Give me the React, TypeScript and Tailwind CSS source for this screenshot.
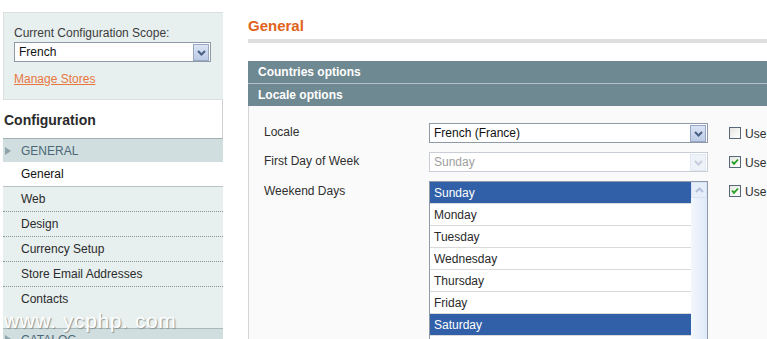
import React from "react";

function Chevron({ up = false, color }: { up?: boolean; color: string }) {
  return (
    <svg width="9" height="6" viewBox="0 0 9 6">
      <path
        d={up ? "M1 5 L4.5 1.5 L8 5" : "M1 1 L4.5 4.5 L8 1"}
        fill="none"
        stroke={color}
        strokeWidth="2"
      />
    </svg>
  );
}

function ArrowBtn({ disabled = false }: { disabled?: boolean }) {
  return (
    <div
      className={
        disabled
          ? "w-[16px] h-[17px] mt-[1px] mr-[1px] border border-[#e2e8f2] bg-[#eef2f9] flex items-center justify-center"
          : "w-[16px] h-[17px] mt-[1px] mr-[1px] border border-[#98a8c4] bg-gradient-to-b from-[#dbe4f4] to-[#bccbe6] flex items-center justify-center"
      }
    >
      <Chevron color={disabled ? "#c4cede" : "#4a5e86"} />
    </div>
  );
}

function Select({
  value,
  width,
  disabled = false,
}: {
  value: string;
  width: string;
  disabled?: boolean;
}) {
  return (
    <div
      className={
        (disabled ? "border-[#c9ced6] text-[#a0a0a0] " : "border-[#8f9aa8] text-[#111] ") +
        "h-[20px] shrink-0 border bg-white flex justify-between items-start " +
        width
      }
    >
      <span className="pl-[4px] leading-[19px]">{value}</span>
      <ArrowBtn disabled={disabled} />
    </div>
  );
}

function Checkbox({ checked }: { checked: boolean }) {
  return (
    <div className="w-[12px] h-[12px] border border-[#56687a] bg-gradient-to-br from-[#e6e6e0] to-white flex items-center justify-center">
      {checked && (
        <svg width="8" height="8" viewBox="0 0 8 8">
          <path d="M1 3.5 L3 5.8 L7 1.5" fill="none" stroke="#20a020" strokeWidth="1.8" />
        </svg>
      )}
    </div>
  );
}

function Tab({ label, first = false }: { label: string; first?: boolean }) {
  return (
    <div
      className={
        (first ? "border-t border-[#b8c4c4] " : "border-t border-dotted border-[#8a9494] ") +
        "h-[25px] bg-[#e7efef] pl-[18px] leading-[25px] text-[#2b2b2b]"
      }
    >
      {label}
    </div>
  );
}

const days = ["Sunday", "Monday", "Tuesday", "Wednesday", "Thursday", "Friday", "Saturday"];
const selected = [0, 6];

export default function App() {
  return (
    <div className="relative w-[767px] h-[339px] overflow-hidden bg-white flex items-start font-['Liberation_Sans',Arial,sans-serif] text-[12px] text-[#2f2f2f]">
      {/* Sidebar */}
      <div className="ml-[3px] w-[220px] shrink-0 pt-[12px]">
        <div className="h-[88px] bg-[#e7efef] border-t border-l border-b border-[#d8e0e0] pl-[10px] pt-[13px]">
          <div className="leading-[15px] text-[#3c3c3c]">Current Configuration Scope:</div>
          <div className="mt-[1px]">
            <Select value="French" width="w-[197px]" />
          </div>
          <div className="mt-[10px] leading-[15px] text-[#e7773d] underline">Manage Stores</div>
        </div>
        <div className="h-[39px] bg-white border-r border-r-[#cfcfcf] border-b border-b-[#9fb0b2] pl-[1px] flex items-center">
          <span className="text-[14px] font-bold text-[#2a2a2a] mt-[2px]">Configuration</span>
        </div>
        <div className="h-[23px] bg-[#d1dedf] flex items-center">
          <svg width="6" height="8" viewBox="0 0 6 8" className="ml-[2px]">
            <path d="M0 0 L6 4 L0 8 Z" fill="#8fa3aa" />
          </svg>
          <span className="ml-[10px] mt-[1px] text-[#4b6878]">GENERAL</span>
        </div>
        <div className="h-[24px] bg-white pl-[18px] leading-[24px] text-[#111]">General</div>
        <Tab label="Web" first />
        <Tab label="Design" />
        <Tab label="Currency Setup" />
        <Tab label="Store Email Addresses" />
        <Tab label="Contacts" />
        <div className="h-[17px] bg-[#e7efef]" />
        <div className="h-[30px] border-t border-[#a9b8b9] bg-[#d1dedf] flex items-start">
          <svg width="6" height="8" viewBox="0 0 6 8" className="ml-[2px] mt-[6px]">
            <path d="M0 0 L6 4 L0 8 Z" fill="#8fa3aa" />
          </svg>
          <span className="ml-[10px] mt-[2px] text-[#4b6878]">CATALOG</span>
        </div>
      </div>

      {/* Main */}
      <div className="ml-[25px] flex-1 pt-[16px]">
        <div className="text-[15px] leading-[19px] font-bold text-[#e0621a]">General</div>
        <div className="mt-[4px] h-[4px] bg-[#dedede]" />
        <div className="mt-[18px] h-[22px] bg-[#6f8992] pl-[10px] leading-[23px] font-bold text-white">
          Countries options
        </div>
        <div className="h-[1px] bg-[#b3c2c7]" />
        <div className="h-[22px] bg-[#6f8992] pl-[10px] leading-[23px] font-bold text-white">
          Locale options
        </div>
        <div className="h-[260px] bg-[#fafafa] border-l border-[#d6d6d6] pl-[15px] pt-[17px] flex flex-col gap-[9px]">
          <div className="flex items-start shrink-0">
            <div className="w-[165px] shrink-0 pt-[2px] leading-[14px]">Locale</div>
            <Select value="French (France)" width="w-[279px]" />
            <div className="ml-[21px] h-[20px] flex items-center gap-[4px]">
              <Checkbox checked={false} />
              <span className="mt-[1px]">Use</span>
            </div>
          </div>
          <div className="flex items-start shrink-0">
            <div className="w-[165px] shrink-0 pt-[2px] leading-[14px]">First Day of Week</div>
            <Select value="Sunday" width="w-[279px]" disabled />
            <div className="ml-[21px] h-[20px] flex items-center gap-[4px]">
              <Checkbox checked />
              <span className="mt-[1px]">Use</span>
            </div>
          </div>
          <div className="flex items-start shrink-0">
            <div className="w-[165px] shrink-0 pt-[3px] leading-[14px]">Weekend Days</div>
            <div className="w-[279px] h-[200px] shrink-0 border border-[#8f9aa8] bg-white flex">
              <div className="flex-1 flex flex-col">
                {days.map((d, i) => (
                  <div
                    key={i}
                    className={
                      (selected.includes(i) ? "bg-[#3160a8] text-white " : "bg-white text-[#2a2a2a] ") +
                      "h-[22px] shrink-0 border-b border-[#dadada] pl-[4px] leading-[22px]"
                    }
                  >
                    {d}
                  </div>
                ))}
              </div>
              <div className="w-[16px] bg-gradient-to-r from-[#f3f7fd] to-[#dfe9f8] flex flex-col">
                <div className="h-[16px] border border-[#d6e2f4] bg-[#e6eefa] flex items-center justify-center">
                  <Chevron up color="#b0c0da" />
                </div>
              </div>
            </div>
            <div className="ml-[21px] h-[20px] flex items-center gap-[4px]">
              <Checkbox checked />
              <span className="mt-[1px]">Use</span>
            </div>
          </div>
        </div>
      </div>

      {/* Watermark */}
      <div className="absolute left-[4px] top-[309px] text-[21px] leading-[24px] tracking-[0.6px] text-white [text-shadow:1px_1px_1px_#8a9696]">
        www. ycphp. com
      </div>
    </div>
  );
}
